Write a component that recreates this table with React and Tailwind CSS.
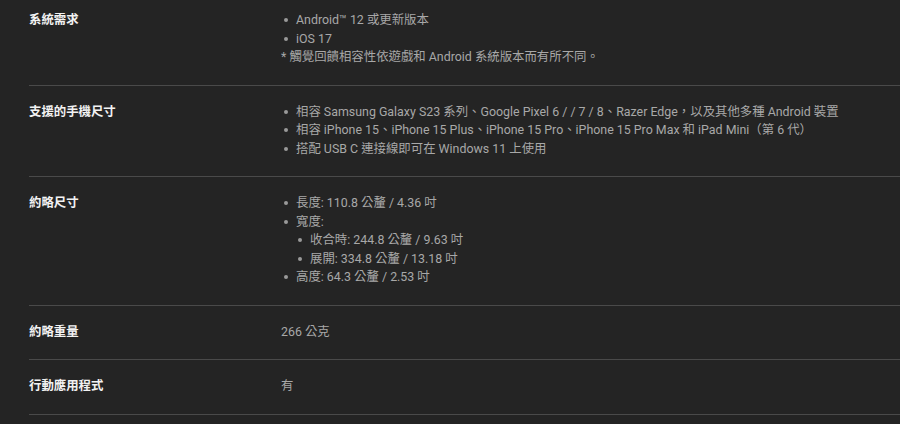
import React from "react";

const Bullet = ({ children }) => (
  <li className="flex items-center">
    <span className="ml-[3px] mr-[8px] h-[4px] w-[4px] shrink-0 rounded-full bg-[#9a9a9a]" />
    <span>{children}</span>
  </li>
);

const Row = ({ label, children }) => (
  <div className="flex border-b border-[#4a4a4a] pt-[17px] pb-[18px]">
    <div className="w-[252px] shrink-0 text-[12.4px] font-bold leading-[18.5px] text-[#f2f2f2]">{label}</div>
    <div className="flex-1 text-[12.4px] leading-[18.5px] text-[#a8a8a8]">{children}</div>
  </div>
);

export default function App() {
  return (
    <div
      className="h-[424px] w-[900px] overflow-hidden bg-[#242424] pl-[29px]"
      style={{ fontFamily: 'Roboto, "Noto Sans CJK TC", sans-serif' }}
    >
      <div className="-mt-[6px]">
        <Row label="系統需求">
          <ul>
            <Bullet>Android™ 12 或更新版本</Bullet>
            <Bullet>iOS 17</Bullet>
          </ul>
          <p>* 觸覺回饋相容性依遊戲和 Android 系統版本而有所不同。</p>
        </Row>
        <Row label="支援的手機尺寸">
          <ul>
            <Bullet>相容 Samsung Galaxy S23 系列、Google Pixel 6 / / 7 / 8、Razer Edge，以及其他多種 Android 裝置</Bullet>
            <Bullet>相容 iPhone 15、iPhone 15 Plus、iPhone 15 Pro、iPhone 15 Pro Max 和 iPad Mini（第 6 代）</Bullet>
            <Bullet>搭配 USB C 連接線即可在 Windows 11 上使用</Bullet>
          </ul>
        </Row>
        <Row label="約略尺寸">
          <ul>
            <Bullet>長度: 110.8 公釐 / 4.36 吋</Bullet>
            <Bullet>寬度:</Bullet>
            <li>
              <ul className="pl-[14px]">
                <Bullet>收合時: 244.8 公釐 / 9.63 吋</Bullet>
                <Bullet>展開: 334.8 公釐 / 13.18 吋</Bullet>
              </ul>
            </li>
            <Bullet>高度: 64.3 公釐 / 2.53 吋</Bullet>
          </ul>
        </Row>
        <Row label="約略重量">
          <p>266 公克</p>
        </Row>
        <Row label="行動應用程式">
          <p>有</p>
        </Row>
      </div>
    </div>
  );
}
